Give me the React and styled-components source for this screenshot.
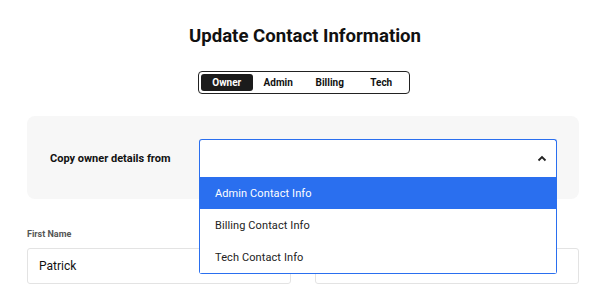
import styled, { createGlobalStyle } from "styled-components";

const GlobalStyle = createGlobalStyle`
  body {
    margin: 0;
    background: #fff;
    font-family: Roboto, "Liberation Sans", sans-serif;
    color: #111;
  }
`;

const tabs = ["Owner", "Admin", "Billing", "Tech"];
const options = ["Admin Contact Info", "Billing Contact Info", "Tech Contact Info"];

const ChevronUp = () => (
  <svg width="10" height="7" viewBox="0 0 10 7">
    <path d="M1.5 5.5 L5 2 L8.5 5.5" fill="none" stroke="#222" strokeWidth="1.8" />
  </svg>
);

const App = () => {
  return (
    <Page>
      <GlobalStyle />
      <Title>Update Contact Information</Title>
      <TabBar>
        {tabs.map((t, i) => (
          <Tab key={t} active={i === 0}>
            {t}
          </Tab>
        ))}
      </TabBar>
      <Panel>
        <PanelLabel>Copy owner details from</PanelLabel>
        <Select>
          <SelectHead>
            <ChevronUp />
          </SelectHead>
          <Menu>
            {options.map((o, i) => (
              <Option key={o} active={i === 0}>
                {o}
              </Option>
            ))}
          </Menu>
        </Select>
      </Panel>
      <Fields>
        <Field>
          <FieldLabel>First Name</FieldLabel>
          <Input>Patrick</Input>
        </Field>
        <Field>
          <FieldLabel>&nbsp;</FieldLabel>
          <Input></Input>
        </Field>
      </Fields>
    </Page>
  );
};

export default App;

const Page = styled.div`
  padding: 24px 31px 0 27px;
  display: flex;
  flex-direction: column;
  align-items: center;
`;

const Title = styled.div`
  font-size: 18.6px;
  font-weight: 700;
  line-height: 24px;
  margin-left: 4px;
`;

const TabBar = styled.div`
  box-sizing: border-box;
  margin-top: 23px;
  margin-left: 2px;
  display: flex;
  padding: 2px;
  border: 1px solid #222;
  border-radius: 4px;
  width: 212px;
`;

const Tab = styled.div`
  flex: 1;
  height: 17px;
  display: flex;
  align-items: center;
  justify-content: center;
  font-size: 10px;
  font-weight: 700;
  border-radius: 3px;
  background: ${(p) => (p.active ? "#1b1b1b" : "transparent")};
  color: ${(p) => (p.active ? "#fff" : "#111")};
`;

const Panel = styled.div`
  align-self: stretch;
  margin-top: 22px;
  background: #f7f7f7;
  border-radius: 8px;
  padding: 23px 22px 22px 23px;
  display: flex;
  align-items: flex-start;
  position: relative;
  z-index: 2;
`;

const PanelLabel = styled.div`
  width: 149px;
  height: 38px;
  display: flex;
  align-items: center;
  font-size: 11px;
  font-weight: 700;
`;

const Select = styled.div`
  flex: 1;
  position: relative;
`;

const SelectHead = styled.div`
  height: 37px;
  background: #fff;
  border: 1px solid #2a6fef;
  border-bottom: none;
  border-radius: 3px 3px 0 0;
  display: flex;
  align-items: center;
  justify-content: flex-end;
  padding-right: 9px;
`;

const Menu = styled.div`
  position: absolute;
  top: 38px;
  left: 0;
  right: 0;
  background: #fff;
  border: 1px solid #2a6fef;
  border-top: none;
  border-radius: 0 0 3px 3px;
`;

const Option = styled.div`
  height: 32px;
  display: flex;
  align-items: center;
  padding-left: 15px;
  font-size: 11px;
  letter-spacing: 0.1px;
  background: ${(p) => (p.active ? "#2a6fef" : "#fff")};
  color: ${(p) => (p.active ? "#fff" : "#222")};
`;

const Fields = styled.div`
  align-self: stretch;
  margin-top: 28px;
  display: grid;
  grid-template-columns: 1fr 1fr;
  gap: 24px;
`;

const Field = styled.div`
  display: flex;
  flex-direction: column;
`;

const FieldLabel = styled.div`
  font-size: 9px;
  font-weight: 700;
  color: #555;
  line-height: 14px;
  margin-bottom: 7px;
`;

const Input = styled.div`
  height: 34px;
  border: 1px solid #e3e3e3;
  border-radius: 3px;
  background: #fff;
  display: flex;
  align-items: center;
  padding-left: 11px;
  font-size: 12px;
  color: #111;
`;
